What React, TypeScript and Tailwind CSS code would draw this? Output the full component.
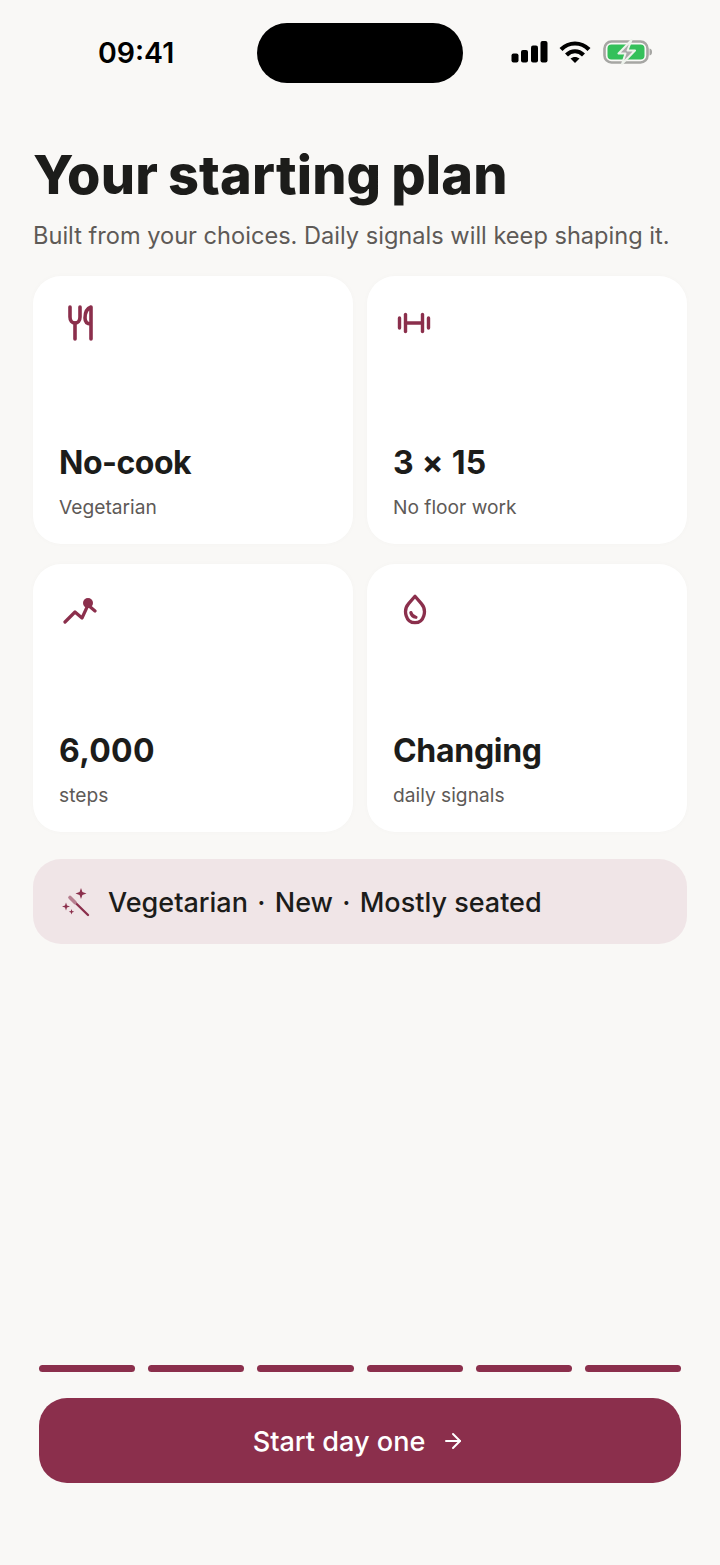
import { ArrowRight } from "lucide-react";
import type { ReactNode } from "react";

const FONT = "[font-family:Inter,'Liberation_Sans',sans-serif]";

function StatusBar() {
  return (
    <div className="grid h-[106px] shrink-0 grid-cols-[1fr_206px_1fr] items-start pt-[23px]">
      <span className="mt-[12px] pl-[98px] text-[28.500px] leading-[36px] font-semibold text-black">09:41</span>
      <div className="h-[60px] rounded-[30px] bg-black" />
      <div className="ml-[48px] mt-[17px] flex items-center gap-[12px]">
        <svg width="37" height="24" viewBox="0 0 37 24" fill="#000">
          <rect x="0.5" y="13.5" width="7" height="9" rx="2" />
          <rect x="10" y="10" width="7" height="12.5" rx="2" />
          <rect x="20" y="5.5" width="7" height="17" rx="2" />
          <rect x="29.5" y="1" width="7" height="21.5" rx="2" />
        </svg>
        <svg width="32" height="24" viewBox="0 0 32 24" fill="none" stroke="#000" strokeWidth="4.200" className="-ml-[1px]">
          <path d="M2 9.500C10 1.500 22 1.500 30 9.500" />
          <path d="M7.500 15C12.500 10 19.500 10 24.500 15" />
          <path d="M16 23 L11.500 18.500C14 16.400 18 16.400 20.500 18.500Z" fill="#000" stroke="none" />
        </svg>
        <svg width="50" height="26" viewBox="0 0 50 26" className="-my-[1px]">
          <rect x="1.500" y="2.500" width="43" height="21" rx="7" fill="none" stroke="#a6a6a3" strokeWidth="2.600" />
          <rect x="4.500" y="5.500" width="37" height="15" rx="4" fill="#34c05a" />
          <path d="M46.500 9.500c2 .5 2.500 1.800 2.500 3.500s-.5 3-2.500 3.500z" fill="#a6a6a3" />
          <path d="M28.500 1 15.500 14.500h7L19 25l13-13.500h-7.500z" fill="#a9a9a9" stroke="#eef3ec" strokeWidth="2" strokeLinejoin="round" />
        </svg>
      </div>
    </div>
  );
}

function PlanCard({ icon, title, sub, tracking }: { icon: ReactNode; title: string; sub: string; tracking: string }) {
  return (
    <div className="flex h-[268px] flex-col rounded-[28px] bg-white pl-[26px] pb-[24px] pt-[27px] shadow-[0_0_6px_rgba(60,40,40,0.02)]">
      <div className="flex h-[40px] items-center text-[#8b2f4c]">{icon}</div>
      <div className={`mt-auto text-[32px] leading-[42px] font-bold text-[#1c1c1a] ${tracking}`}>{title}</div>
      <div className="mt-[10px] text-[19.200px] leading-[26px] text-[#5e5a57]">{sub}</div>
    </div>
  );
}

function Fork() {
  return (
    <svg width="26" height="36" viewBox="0 0 26 36" fill="none" stroke="currentColor" strokeWidth="3.600" strokeLinecap="round" strokeLinejoin="round" className="ml-[9px]">
      <path d="M2 2v10c0 3.500 2 6 5 6s5-2.500 5-6V2" />
      <path d="M7 18v16" />
      <path d="M23 34V2c-4 1.500-6 6-6 11 0 4 2 6 6 6" />
    </svg>
  );
}

function Dumbbell() {
  return (
    <svg width="34" height="24" viewBox="0 0 34 24" fill="none" stroke="currentColor" strokeWidth="3.400" strokeLinecap="round" className="ml-[4px]">
      <path d="M2.500 7v10" />
      <path d="M8.500 3.500v17" />
      <path d="M8.500 12h17" />
      <path d="M25.500 3.500v17" />
      <path d="M31.500 7v10" />
    </svg>
  );
}

function Trend() {
  return (
    <svg width="36" height="30" viewBox="0 0 36 30" fill="none" stroke="currentColor" strokeWidth="3.200" strokeLinecap="round" strokeLinejoin="round" className="ml-[3px] mt-[-4px]">
      <path d="M3 28l10-10 7 6 6-13 7 6" />
      <circle cx="26" cy="9" r="5" fill="currentColor" stroke="none" />
    </svg>
  );
}

function Drop() {
  return (
    <svg width="24" height="31" viewBox="0 0 26 34" fill="none" stroke="currentColor" strokeWidth="3.600" strokeLinecap="round" strokeLinejoin="round" className="ml-[10px] mt-[-3px]">
      <path d="M13 2.500 6 10.500C-.5 18 3 31.500 13 31.500S26.500 18 20 10.500z" />
      <path d="M8.500 20.500c.5 2.500 2.500 4.500 5.500 5" />
    </svg>
  );
}

function Wand() {
  return (
    <svg width="30" height="30" viewBox="0 0 30 30" fill="none" className="shrink-0 text-[#8b2f4c]">
      <path d="M8 10.500 26 28" stroke="currentColor" strokeWidth="2.400" strokeLinecap="round" />
      <path d="M8 10.500l5 5" stroke="#b77f90" strokeWidth="3.600" strokeLinecap="round" />
      <path d="M19 1l1.400 4.100 4.100 1.400-4.100 1.400L19 12l-1.400-4.100-4.100-1.400 4.100-1.400z" fill="currentColor" />
      <path d="M4 15.500l1 3 3 1-3 1-1 3-1-3-3-1 3-1z" fill="currentColor" />
      <path d="M9.500 22l.7 2 2 .7-2 .7-.7 2-.7-2-2-.7 2-.7z" fill="currentColor" />
    </svg>
  );
}

export default function App() {
  return (
    <div className={`${FONT} flex h-[1565px] w-[720px] flex-col bg-[#f9f8f6]`}>
      <StatusBar />
      <div className="px-[33px]">
        <h1 className="mt-[38px] text-[54px] leading-[62px] font-extrabold tracking-[0.15px] [word-spacing:-2px] text-[#1c1c1a]">Your starting plan</h1>
        <p className="mt-[14px] text-[23.600px] leading-[32px] text-[#5e5a57]">Built from your choices. Daily signals will keep shaping it.</p>
        <div className="mt-[24px] grid grid-cols-[320px_320px] gap-x-[14px] gap-y-[20px]">
          <PlanCard icon={<Fork />} title="No-cook" sub="Vegetarian" tracking="tracking-[-0.5px]" />
          <PlanCard icon={<Dumbbell />} title="3 × 15" sub="No floor work" tracking="tracking-[0.3px]" />
          <PlanCard icon={<Trend />} title="6,000" sub="steps" tracking="tracking-[0.3px]" />
          <PlanCard icon={<Drop />} title="Changing" sub="daily signals" tracking="tracking-[-0.3px]" />
        </div>
        <div className="mt-[27px] flex h-[85px] items-center gap-[16px] rounded-[28px] bg-[#f0e5e7] pl-[29px]">
          <Wand />
          <div className="flex gap-[9.300px] pt-[3px] text-[27px] font-medium text-[#1c1c1a]">
            <span>Vegetarian</span>
            <span>·</span>
            <span>New</span>
            <span>·</span>
            <span>Mostly seated</span>
          </div>
        </div>
      </div>
      <div className="mt-auto px-[39px] pb-[82px]">
        <div className="flex gap-[13px]">
          {[0, 1, 2, 3, 4, 5].map((i) => (
            <div key={i} className="h-[7px] flex-1 rounded-full bg-[#8b2f4c]" />
          ))}
        </div>
        <button className="mt-[26px] flex h-[85px] w-full items-center justify-center gap-[16px] rounded-[28px] bg-[#8b2f4c] pr-[2px] text-[27.100px] font-medium text-white">
          <span className="pt-[3px]">Start day one</span>
          <ArrowRight size={24} strokeWidth={2} />
        </button>
      </div>
    </div>
  );
}
